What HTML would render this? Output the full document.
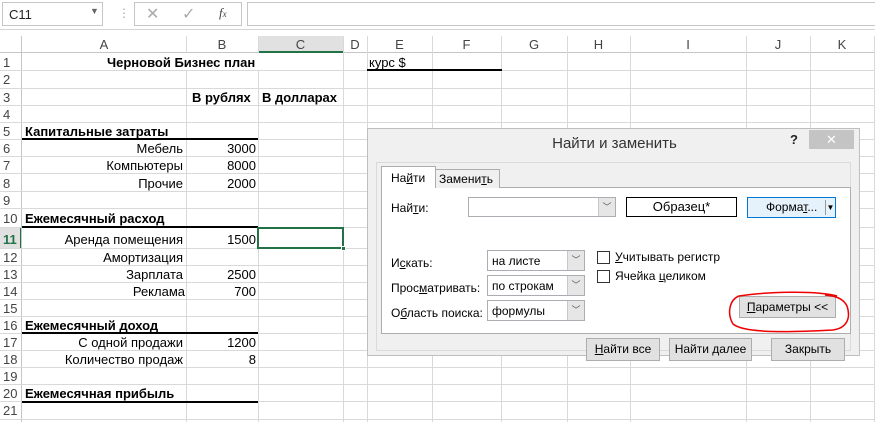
<!DOCTYPE html>
<html><head><meta charset="utf-8"><style>
*{box-sizing:border-box;margin:0;padding:0}
body{width:875px;height:422px;overflow:hidden;background:#fff;font-family:"Liberation Sans",Arial,sans-serif;font-size:13px;color:#000;position:relative}
.a{position:absolute}
.vl{position:absolute;top:36px;width:1px;height:386px;background:#d9d9d9}
.hl{position:absolute;left:0;width:875px;height:1px;background:#d9d9d9}
.ch{position:absolute;top:37px;height:16px;text-align:center;color:#444;font-size:13px;line-height:16px}
.rn{position:absolute;left:0;width:22px;padding-left:3px;color:#444;font-size:13px}
.t{position:absolute;white-space:nowrap;font-size:13px}
.b{font-weight:bold}
.r{text-align:right}
.dlg{position:absolute;left:367px;top:128px;width:493px;height:228px;background:#f0f0f0;border:1px solid #bfbfbf}
.dlg .t{font-size:12px}
.cb{position:absolute;background:#fff;border:1px solid #abadb3}
.dd{position:absolute;right:0;top:0;bottom:0;width:17px;background:#e6e6e6;border-left:1px solid #c8c8c8;color:#555;font-size:9px;text-align:center}
.btn{position:absolute;background:#e1e1e1;border:1px solid #adadad;font-size:12px;text-align:center}
u{text-decoration:underline}
</style></head><body>
<div class="a" style="left:0;top:0;width:875px;height:30px;background:#fff;border-bottom:1px solid #d4d4d4"></div>
<div class="a" style="left:2px;top:2px;width:101px;height:24px;border:1px solid #c6c6c6"></div>
<div class="t" style="left:9px;top:7px;font-size:13px;color:#222">C11</div>
<div class="t" style="left:90px;top:6px;font-size:9px;color:#666">▼</div>
<div class="t" style="left:118px;top:6px;color:#aaa;font-size:12px">⋮</div>
<div class="a" style="left:134px;top:2px;width:108px;height:24px;border:1px solid #c6c6c6"></div>
<div class="t" style="left:146px;top:4px;color:#aaa;font-size:16px">✕</div>
<div class="t" style="left:182px;top:4px;color:#aaa;font-size:16px">✓</div>
<div class="t" style="left:219px;top:5px;color:#444;font-style:italic;font-family:'Liberation Serif',serif;font-size:13px">f<span style="font-size:9px">x</span></div>
<div class="a" style="left:247px;top:2px;width:630px;height:24px;border:1px solid #c6c6c6"></div>
<div class="a" style="left:0;top:36px;width:875px;height:17px;background:#fff;border-bottom:1px solid #c6c6c6"></div>
<div class="a" style="left:258px;top:36px;width:85px;height:17px;background:#e1e1e1;border-bottom:2px solid #217346"></div>
<div class="a" style="left:0;top:228px;width:22px;height:20px;background:#e1e1e1;border-right:2px solid #217346"></div>
<div class="a" style="left:21px;top:36px;width:1px;height:386px;background:#c6c6c6"></div>
<div class="vl" style="left:186px"></div><div class="vl" style="left:258px"></div><div class="vl" style="left:343px"></div><div class="vl" style="left:367px"></div><div class="vl" style="left:432px"></div><div class="vl" style="left:501px"></div><div class="vl" style="left:567px"></div><div class="vl" style="left:630px"></div><div class="vl" style="left:746px"></div><div class="vl" style="left:810px"></div><div class="vl" style="left:874px"></div>
<div class="hl" style="top:70px"></div><div class="hl" style="top:88px"></div><div class="hl" style="top:105px"></div><div class="hl" style="top:122px"></div><div class="hl" style="top:139px"></div><div class="hl" style="top:156px"></div><div class="hl" style="top:173px"></div><div class="hl" style="top:191px"></div><div class="hl" style="top:208px"></div><div class="hl" style="top:227px"></div><div class="hl" style="top:248px"></div><div class="hl" style="top:265px"></div><div class="hl" style="top:282px"></div><div class="hl" style="top:299px"></div><div class="hl" style="top:316px"></div><div class="hl" style="top:333px"></div><div class="hl" style="top:350px"></div><div class="hl" style="top:367px"></div><div class="hl" style="top:384px"></div><div class="hl" style="top:401px"></div><div class="hl" style="top:419px"></div>
<div class="a" style="left:22px;top:53px;width:321px;height:17px;background:#fff"></div>
<div class="ch" style="left:22px;width:164px">A</div><div class="ch" style="left:186px;width:72px">B</div><div class="ch" style="left:258px;width:85px">C</div><div class="ch" style="left:343px;width:24px">D</div><div class="ch" style="left:367px;width:65px">E</div><div class="ch" style="left:432px;width:69px">F</div><div class="ch" style="left:501px;width:66px">G</div><div class="ch" style="left:567px;width:63px">H</div><div class="ch" style="left:630px;width:116px">I</div><div class="ch" style="left:746px;width:64px">J</div><div class="ch" style="left:810px;width:64px">K</div>
<div class="rn" style="top:55px">1</div><div class="rn" style="top:72px">2</div><div class="rn" style="top:90px">3</div><div class="rn" style="top:107px">4</div><div class="rn" style="top:124px">5</div><div class="rn" style="top:141px">6</div><div class="rn" style="top:158px">7</div><div class="rn" style="top:176px">8</div><div class="rn" style="top:193px">9</div><div class="rn" style="top:211px">10</div><div class="rn b" style="top:232px;color:#217346">11</div><div class="rn" style="top:250px">12</div><div class="rn" style="top:267px">13</div><div class="rn" style="top:284px">14</div><div class="rn" style="top:301px">15</div><div class="rn" style="top:318px">16</div><div class="rn" style="top:335px">17</div><div class="rn" style="top:352px">18</div><div class="rn" style="top:369px">19</div><div class="rn" style="top:386px">20</div><div class="rn" style="top:403px">21</div>
<div class="t b" style="left:107px;top:55px">Черновой Бизнес план</div>
<div class="t" style="left:369px;top:55px">курс $</div>
<div class="a" style="left:367px;top:69px;width:135px;height:2px;background:#000"></div>
<div class="t b" style="left:192px;top:90px">В рублях</div>
<div class="t b" style="left:262px;top:90px">В долларах</div>
<div class="t b" style="left:25px;top:124px">Капитальные затраты</div>
<div class="a" style="left:22px;top:138px;width:236px;height:2px;background:#000"></div>
<div class="t r" style="left:22px;width:161px;top:141px">Мебель</div><div class="t r" style="left:186px;width:70px;top:141px">3000</div>
<div class="t r" style="left:22px;width:161px;top:158px">Компьютеры</div><div class="t r" style="left:186px;width:70px;top:158px">8000</div>
<div class="t r" style="left:22px;width:161px;top:176px">Прочие</div><div class="t r" style="left:186px;width:70px;top:176px">2000</div>
<div class="t b" style="left:25px;top:211px">Ежемесячный расход</div>
<div class="a" style="left:22px;top:226px;width:236px;height:2px;background:#000"></div>
<div class="t r" style="left:22px;width:161px;top:232px">Аренда помещения</div><div class="t r" style="left:186px;width:70px;top:232px">1500</div>
<div class="t r" style="left:22px;width:161px;top:250px">Амортизация</div>
<div class="t r" style="left:22px;width:161px;top:267px">Зарплата</div><div class="t r" style="left:186px;width:70px;top:267px">2500</div>
<div class="t r" style="left:22px;width:163px;top:284px">Реклама</div><div class="t r" style="left:186px;width:70px;top:284px">700</div>
<div class="t b" style="left:25px;top:318px">Ежемесячный доход</div>
<div class="a" style="left:22px;top:332px;width:236px;height:2px;background:#000"></div>
<div class="t r" style="left:22px;width:161px;top:335px">С одной продажи</div><div class="t r" style="left:186px;width:70px;top:335px">1200</div>
<div class="t r" style="left:22px;width:161px;top:352px">Количество продаж</div><div class="t r" style="left:186px;width:70px;top:352px">8</div>
<div class="t b" style="left:25px;top:386px">Ежемесячная прибыль</div>
<div class="a" style="left:22px;top:401px;width:236px;height:2px;background:#000"></div>
<div class="a" style="left:257px;top:227px;width:87px;height:22px;border:2px solid #217346"></div>
<div class="a" style="left:341px;top:246px;width:5px;height:5px;background:#217346;border:1px solid #fff"></div>
<div class="dlg">
<div class="t" style="left:0;width:493px;text-align:center;top:6px;font-size:15px;color:#333">Найти и заменить</div>
<div class="t b" style="left:422px;top:3px;font-size:13px;color:#222">?</div>
<div class="a" style="left:441px;top:1px;width:45px;height:19px;background:#c4c4c4;color:#fff;text-align:center;font-size:13px;line-height:19px">✕</div>
<div class="a" style="left:8px;top:33px;width:475px;height:189px;border:1px solid #dadada"></div>
<div class="a" style="left:13px;top:58px;width:470px;height:147px;background:#fff;border:1px solid #adadad"></div>
<div class="a" style="left:67px;top:40px;width:65px;height:19px;background:#f0f0f0;border:1px solid #adadad;border-bottom:none"></div>
<div class="t" style="left:71px;top:43px;font-size:12px">Замени<u>т</u>ь</div>
<div class="a" style="left:13px;top:37px;width:55px;height:22px;background:#fff;border:1px solid #adadad;border-bottom:none"></div>
<div class="t" style="left:23px;top:42px;font-size:12px">На<u>й</u>ти</div>
<div class="t" style="left:23px;top:72px">Най<u>т</u>и:</div>
<div class="cb" style="left:100px;top:68px;width:148px;height:20px"><div class="dd" style="line-height:18px">﹀</div></div>
<div class="a" style="left:258px;top:68px;width:111px;height:20px;border:1px solid #000;background:#fff;text-align:center;font-size:13px;line-height:18px">Образец*</div>
<div class="a" style="left:379px;top:68px;width:89px;height:21px;background:#e5f1fb;border:1px solid #0078d7;font-size:12px;line-height:19px;padding-left:18px">Форма<u>т</u>...<span style="position:absolute;right:0;top:2px;bottom:2px;width:10px;border-left:1px solid #999;font-size:8px;line-height:15px;text-align:center">▼</span></div>
<div class="t" style="left:23px;top:127px">И<u>с</u>кать:</div>
<div class="t" style="left:23px;top:152px">Прос<u>м</u>атривать:</div>
<div class="t" style="left:23px;top:177px">О<u>б</u>ласть поиска:</div>
<div class="cb" style="left:119px;top:121px;width:98px;height:21px"><span class="t" style="left:4px;top:3px">на листе</span><div class="dd" style="line-height:19px">﹀</div></div>
<div class="cb" style="left:119px;top:146px;width:98px;height:21px"><span class="t" style="left:4px;top:3px">по строкам</span><div class="dd" style="line-height:19px">﹀</div></div>
<div class="cb" style="left:119px;top:171px;width:98px;height:21px"><span class="t" style="left:4px;top:3px">формулы</span><div class="dd" style="line-height:19px">﹀</div></div>
<div class="a" style="left:229px;top:122px;width:13px;height:13px;background:#fff;border:1px solid #333"></div>
<div class="t" style="left:247px;top:121px"><u>У</u>читывать регистр</div>
<div class="a" style="left:229px;top:141px;width:13px;height:13px;background:#fff;border:1px solid #333"></div>
<div class="t" style="left:247px;top:140px">Ячейка <u>ц</u>еликом</div>
<div class="btn" style="left:371px;top:167px;width:97px;height:22px;line-height:20px"><u>П</u>араметры &lt;&lt;</div>
<div class="btn" style="left:218px;top:209px;width:74px;height:23px;line-height:21px"><u>Н</u>айти все</div>
<div class="btn" style="left:301px;top:209px;width:83px;height:23px;line-height:21px">Найти <u>д</u>алее</div>
<div class="btn" style="left:403px;top:209px;width:74px;height:23px;line-height:21px">Закрыть</div>
</div>
<svg class="a" style="left:725px;top:288px" width="130" height="50"><path d="M112 8 C90 2 40 4 14 8 C4 12 2 26 8 36 C20 46 70 44 108 42 C122 40 126 30 122 18 C118 10 110 8 100 7" fill="none" stroke="#e00" stroke-width="1.5"/></svg>
</body></html>
